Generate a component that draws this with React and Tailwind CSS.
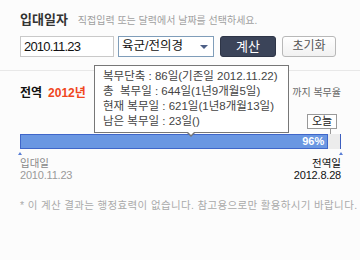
import React from 'react';

const FONT = "font-['Liberation_Sans','Noto_Sans_CJK_KR',sans-serif]";

const tooltipLines = [
  '복무단축 : 86일(기존일 2012.11.22)',
  '총  복무일 : 644일(1년9개월5일)',
  '현재 복무일 : 621일(1년8개월13일)',
  '남은 복무일 : 23일()',
];

const App = () => {
  const percent = 96;

  return (
    <div className={`relative w-[360px] h-[260px] overflow-hidden bg-[#fcfcfc] ${FONT}`}>
      {/* 입력 영역 */}
      <div className="h-[71px] border-b border-[#e8e8e8] px-5 pt-[12px]">
        <div className="flex items-baseline h-[16px] leading-[16px]">
          <h1 className="text-[13px] font-bold text-[#333]">입대일자</h1>
          <p className="ml-[10px] text-[10px] text-[#a0a0a0]">직접입력 또는 달력에서 날짜를 선택하세요.</p>
        </div>
        <div className="mt-[8px] flex items-center h-[21px]">
          <div className="w-[94px] h-[21px] border border-[#c9c9c9] bg-white pl-[3px] text-[13px] leading-[19px] tracking-[-0.8px] text-[#111]">
            2010.11.23
          </div>
          <div className="ml-[4px] w-[96px] h-[21px] border border-[#7f9db9] bg-white pl-[3px] pr-[5px] flex items-center justify-between">
            <span className="text-[12.5px] leading-[19px] text-[#111]">육군/전의경</span>
            <span className="w-0 h-0 border-l-[4px] border-r-[4px] border-t-[4px] border-l-transparent border-r-transparent border-t-[#4d5f86]" />
          </div>
          <button className="ml-[6px] w-[56px] h-[21px] rounded-[3px] border border-[#2e3547] bg-[#3b4459] text-[13px] leading-[19px] text-white">
            계산
          </button>
          <button className="ml-[6px] w-[54px] h-[21px] rounded-[3px] border border-[#b8b8b8] bg-gradient-to-b from-white to-[#f1f1f1] text-[12px] leading-[19px] text-[#555]">
            초기화
          </button>
        </div>
      </div>

      {/* 결과 영역 */}
      <div className="relative pl-5 pr-[19px] pt-[14px]">
        <div className="flex justify-between items-center h-[16px] leading-[16px]">
          <div className="text-[12px] font-bold">
            <span className="text-[#111]">전역</span>
            <span className="ml-[6px] text-[#f0461e]">2012년</span>
          </div>
          <span className="text-[10px] text-[#666]">까지 복무율</span>
        </div>

        {/* 오늘 표시 */}
        <div className="mt-[13px] flex flex-col items-end">
          <div className="mr-[4px] w-[30px] h-[15px] border border-[#999] bg-white text-center text-[11px] leading-[13px] text-[#222]">
            오늘
          </div>
          <div className="mr-[10px] w-px h-[5px] bg-[#999]" />
        </div>

        {/* 막대 */}
        <div className="flex h-[15px] bg-[#ececec]">
          <div
            className="h-full border border-[#3f66c9] bg-[#6a97e2] pr-[3px] text-right text-[11px] font-bold leading-[13px] text-white"
            style={{ width: `${percent}%` }}
          >
            {percent}%
          </div>
          <div className="flex-1" />
          <div className="w-px bg-[#3d5fbf]" />
        </div>
        <div className="flex justify-between h-[8px] pt-[3px]">
          <span className="w-0 h-0 -ml-[2px] border-l-[2px] border-r-[2px] border-b-[3px] border-l-transparent border-r-transparent border-b-[#5a7fd6]" />
          <span className="w-0 h-0 -mr-[2px] border-l-[2px] border-r-[2px] border-b-[3px] border-l-transparent border-r-transparent border-b-[#5a7fd6]" />
        </div>

        <div className="flex justify-between">
          <div>
            <div className="text-[10.5px] leading-[13px] text-[#888]">입대일</div>
            <div className="text-[11px] leading-[11px] tracking-[-0.2px] text-[#9a9a9a]">2010.11.23</div>
          </div>
          <div className="text-right">
            <div className="text-[10.5px] leading-[13px] text-[#111]">전역일</div>
            <div className="text-[11px] leading-[11px] tracking-[-0.2px] text-[#111]">2012.8.28</div>
          </div>
        </div>

        <p className="mt-[18px] whitespace-nowrap text-[10.5px] leading-[12px] tracking-[0.35px] text-[#aaa]">
          * 이 계산 결과는 행정효력이 없습니다. 참고용으로만 활용하시기 바랍니다.
        </p>
      </div>

      {/* 툴팁 */}
      <div className="absolute left-[94px] top-[65px] w-[195px] h-[68px] border border-[#777] bg-white pl-[8px] pt-[3px] text-[11.5px] leading-[15px] text-[#444]">
        {tooltipLines.map((line) => (
          <div key={line} className="whitespace-pre">{line}</div>
        ))}
        <span className="absolute -bottom-[5px] left-[91px] w-0 h-0 border-l-[5px] border-r-[5px] border-t-[5px] border-l-transparent border-r-transparent border-t-[#777]" />
        <span className="absolute -bottom-[3px] left-[92px] w-0 h-0 border-l-[4px] border-r-[4px] border-t-[4px] border-l-transparent border-r-transparent border-t-white" />
      </div>
    </div>
  );
};

export default App;
